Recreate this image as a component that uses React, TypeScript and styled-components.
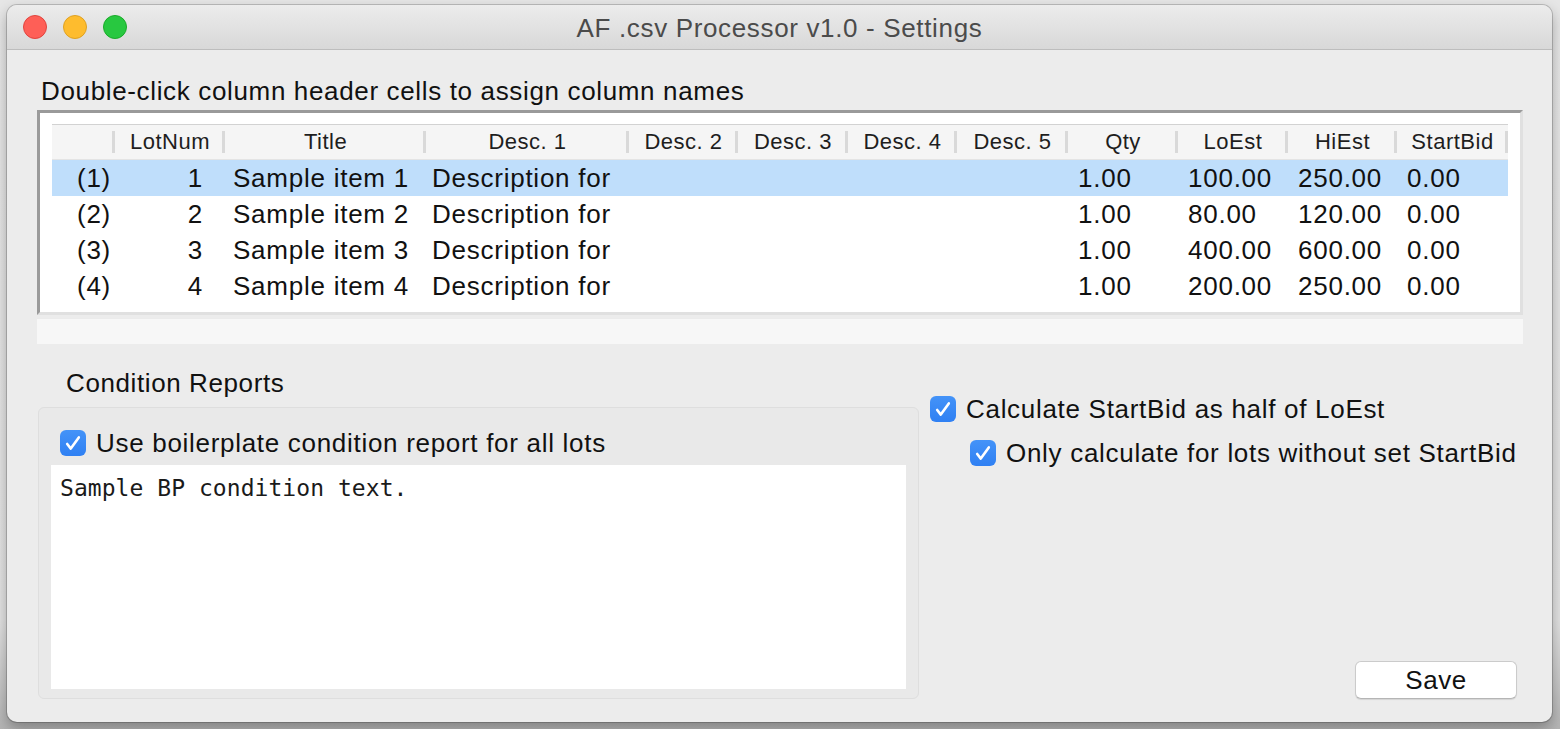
import styled, { createGlobalStyle } from 'styled-components';

const Global = createGlobalStyle`
  html, body {
    margin: 0;
    padding: 0;
    background: #dcdcdc;
    font-family: 'Liberation Sans', Arial, sans-serif;
    color: #111;
  }
`;

const Page = styled.div`
  width: 1560px;
  height: 729px;
  padding: 5px 0 0 7px;
  box-sizing: border-box;
  background: linear-gradient(#e6e6e6 0%, #e2e2e2 85%, #b4b4b4 100%);
  overflow: hidden;
`;

const Window = styled.div`
  width: 1545px;
  height: 717px;
  display: flex;
  flex-direction: column;
  background: #ececec;
  border-radius: 10px;
  overflow: hidden;
  box-shadow: 0 0 0 1px rgba(0, 0, 0, 0.18), 0 6px 14px rgba(0, 0, 0, 0.3);
`;

const TitleBar = styled.div`
  height: 44px;
  flex: none;
  display: grid;
  grid-template-columns: 1fr auto 1fr;
  align-items: center;
  background: linear-gradient(#ececec, #d8d8d8);
  border-bottom: 1px solid #bdbdbd;
`;

const Lights = styled.div`
  display: flex;
  gap: 16px;
  padding-left: 16px;
  padding-bottom: 1px;
`;

const Light = styled.span<{ $fill: string; $edge: string }>`
  width: 24px;
  height: 24px;
  border-radius: 50%;
  box-sizing: border-box;
  background: ${(p) => p.$fill};
  border: 1px solid ${(p) => p.$edge};
`;

const WindowTitle = styled.div`
  font-size: 26px;
  letter-spacing: 0.65px;
  color: #4b4b4b;
  padding-top: 2px;
`;

const Body = styled.div`
  flex: 1;
  display: flex;
  flex-direction: column;
  padding: 27px 29px 23px 30px;
`;

const Hint = styled.div`
  font-size: 26px;
  letter-spacing: 0.65px;
  line-height: 28px;
  padding-left: 4px;
  margin-bottom: 5px;
`;

const TableFrame = styled.div`
  height: 205px;
  box-sizing: border-box;
  background: #fff;
  border-top: 3px solid #9a9a9a;
  border-left: 3px solid #9a9a9a;
  border-right: 3px solid #e0e0e0;
  border-bottom: 3px solid #e0e0e0;
  padding: 11px 10px 0 12px;
  overflow: hidden;
`;

const Grid = styled.div`
  display: grid;
  grid-template-columns: 63px 110px 201px 203px 109px 110px 109px 111px 110px 110px 109px 111px;
`;

const HeadCell = styled.div`
  height: 34px;
  display: flex;
  align-items: center;
  justify-content: center;
  background: #f5f5f5;
  border-top: 1px solid #d2d2d2;
  border-bottom: 1px solid #e4e4e4;
  font-size: 22px;
  letter-spacing: 0.5px;
  color: #1e1e1e;
  position: relative;
  &::after {
    content: '';
    position: absolute;
    right: 0;
    top: 6px;
    bottom: 6px;
    width: 3px;
    background: #d9d9d9;
  }
`;

const Cell = styled.div<{ $selected: boolean; $align: 'left' | 'right'; $pad: number }>`
  height: 36px;
  display: flex;
  align-items: center;
  justify-content: ${(p) => (p.$align === 'right' ? 'flex-end' : 'flex-start')};
  padding: ${(p) => (p.$align === 'right' ? `0 ${p.$pad}px 0 0` : `0 0 0 ${p.$pad}px`)};
  background: ${(p) => (p.$selected ? '#bfdefb' : '#fff')};
  font-size: 26px;
  letter-spacing: 0.75px;
  white-space: nowrap;
  overflow: hidden;
`;

const HScroll = styled.div`
  margin-top: 3px;
  height: 25px;
  background: #f7f7f7;
  border-top: 1px solid #ebebeb;
`;

const Lower = styled.div`
  flex: 1;
  display: flex;
  margin-top: 25px;
`;

const LeftCol = styled.div`
  width: 882px;
  display: flex;
  flex-direction: column;
`;

const GroupTitle = styled.div`
  font-size: 26px;
  letter-spacing: 0.6px;
  line-height: 28px;
  padding-left: 29px;
  margin-bottom: 10px;
`;

const GroupBox = styled.div`
  flex: 1;
  margin-left: 1px;
  display: flex;
  flex-direction: column;
  background: #e9e9e9;
  border: 1px solid #dedede;
  border-radius: 6px;
  padding: 22px 12px 9px 12px;
`;

const CheckRow = styled.label<{ $indent?: number; $gap?: number }>`
  display: flex;
  align-items: center;
  gap: 10px;
  margin-left: ${(p) => p.$indent ?? 0}px;
  margin-top: ${(p) => p.$gap ?? 0}px;
  font-size: 26px;
  letter-spacing: 0.7px;
  line-height: 26px;
  height: 26px;
`;

const Box = styled.span`
  width: 26px;
  height: 26px;
  flex: none;
  border-radius: 6px;
  background: linear-gradient(#4493f8, #2f80f3);
  display: flex;
  align-items: center;
  justify-content: center;
`;

const TextArea = styled.div`
  flex: 1;
  margin-top: 9px;
  background: #fff;
  padding: 10px 9px;
  font-family: 'DejaVu Sans Mono', 'Liberation Mono', monospace;
  font-size: 23px;
  line-height: 26px;
  letter-spacing: 0.05px;
  color: #1a1a1a;
`;

const RightCol = styled.div`
  flex: 1;
  display: flex;
  flex-direction: column;
  margin-left: 11px;
  padding-top: 27px;
`;

const SaveButton = styled.button`
  margin-top: auto;
  margin-right: 6px;
  align-self: flex-end;
  width: 162px;
  height: 38px;
  background: #fff;
  border: 1px solid #cbcbcb;
  border-bottom-color: #b5b5b5;
  border-radius: 6px;
  box-shadow: 0 1px 1px rgba(0, 0, 0, 0.1);
  font-family: 'Liberation Sans', Arial, sans-serif;
  font-size: 26px;
  letter-spacing: 0.5px;
  color: #111;
  padding: 0;
`;

function Check() {
  return (
    <Box>
      <svg width="26" height="26" viewBox="0 0 26 26">
        <path d="M7.2 14 L10.8 18.6 L18.8 7.4" fill="none" stroke="#fff" strokeWidth="2.6" strokeLinecap="round" strokeLinejoin="round" />
      </svg>
    </Box>
  );
}

const headers = ['', 'LotNum', 'Title', 'Desc. 1', 'Desc. 2', 'Desc. 3', 'Desc. 4', 'Desc. 5', 'Qty', 'LoEst', 'HiEst', 'StartBid'];

const rows = [
  ['(1)', '1', 'Sample item 1', 'Description for', '', '', '', '', '1.00', '100.00', '250.00', '0.00'],
  ['(2)', '2', 'Sample item 2', 'Description for', '', '', '', '', '1.00', '80.00', '120.00', '0.00'],
  ['(3)', '3', 'Sample item 3', 'Description for', '', '', '', '', '1.00', '400.00', '600.00', '0.00'],
  ['(4)', '4', 'Sample item 4', 'Description for', '', '', '', '', '1.00', '200.00', '250.00', '0.00'],
];

const colAlign: ('left' | 'right')[] = ['right', 'right', 'left', 'left', 'left', 'left', 'left', 'left', 'left', 'left', 'left', 'left'];
const colPad = [4, 22, 8, 6, 10, 10, 10, 10, 10, 10, 10, 10];

export default function App() {
  return (
    <>
      <Global />
      <Page>
        <Window>
          <TitleBar>
            <Lights>
              <Light $fill="#fe5f57" $edge="#e0443e" />
              <Light $fill="#febc2e" $edge="#dea123" />
              <Light $fill="#28c840" $edge="#1aab29" />
            </Lights>
            <WindowTitle>AF .csv Processor v1.0 - Settings</WindowTitle>
            <div />
          </TitleBar>
          <Body>
            <Hint>Double-click column header cells to assign column names</Hint>
            <TableFrame>
              <Grid>
                {headers.map((h, i) => (
                  <HeadCell key={i}>{h}</HeadCell>
                ))}
                {rows.map((r, ri) =>
                  r.map((v, ci) => (
                    <Cell key={`${ri}-${ci}`} $selected={ri === 0} $align={colAlign[ci]} $pad={colPad[ci]}>
                      {v}
                    </Cell>
                  ))
                )}
              </Grid>
            </TableFrame>
            <HScroll />
            <Lower>
              <LeftCol>
                <GroupTitle>Condition Reports</GroupTitle>
                <GroupBox>
                  <CheckRow $indent={9}>
                    <Check />
                    Use boilerplate condition report for all lots
                  </CheckRow>
                  <TextArea>Sample BP condition text.</TextArea>
                </GroupBox>
              </LeftCol>
              <RightCol>
                <CheckRow>
                  <Check />
                  Calculate StartBid as half of LoEst
                </CheckRow>
                <CheckRow $indent={40} $gap={18}>
                  <Check />
                  Only calculate for lots without set StartBid
                </CheckRow>
                <SaveButton>Save</SaveButton>
              </RightCol>
            </Lower>
          </Body>
        </Window>
      </Page>
    </>
  );
}
